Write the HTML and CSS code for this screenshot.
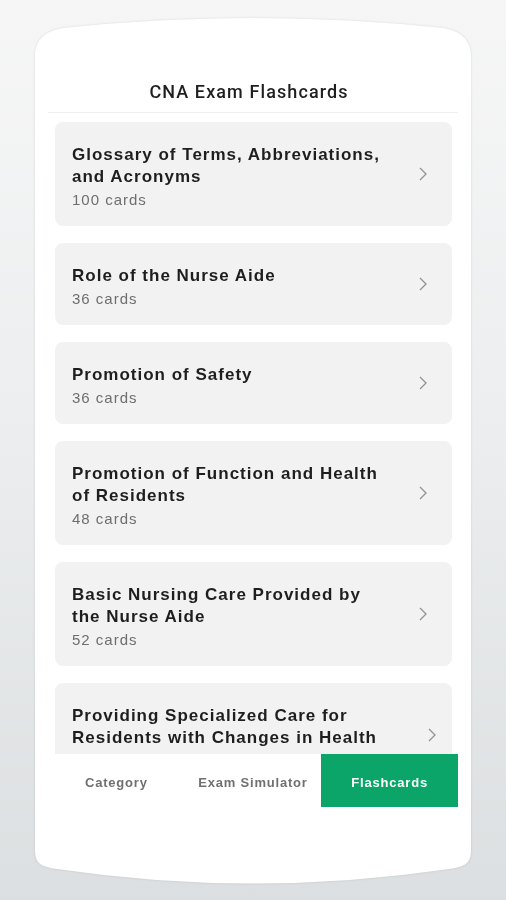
FILE: index.html
```html
<!DOCTYPE html>
<html lang="en">
<head>
  <meta charset="UTF-8" />
  <meta name="viewport" content="width=device-width, initial-scale=1.0"/>
  <title>CNA Exam Flashcards</title>
  <link rel="stylesheet" href="styles.css">
</head>
<body>
  <div class="shell">
    <div class="frame">
      <div class="header">CNA Exam Flashcards</div>

      <div class="list">
        <div class="deck">
          <div class="deck-text">
            <div class="deck-title">Glossary of Terms, Abbreviations, and Acronyms</div>
            <div class="deck-count">100 cards</div>
          </div>
          <svg class="chevron" viewBox="0 0 10 16"><path d="M2 2l6 6-6 6"/></svg>
        </div>

        <div class="deck">
          <div class="deck-text">
            <div class="deck-title">Role of the Nurse Aide</div>
            <div class="deck-count">36 cards</div>
          </div>
          <svg class="chevron" viewBox="0 0 10 16"><path d="M2 2l6 6-6 6"/></svg>
        </div>

        <div class="deck">
          <div class="deck-text">
            <div class="deck-title">Promotion of Safety</div>
            <div class="deck-count">36 cards</div>
          </div>
          <svg class="chevron" viewBox="0 0 10 16"><path d="M2 2l6 6-6 6"/></svg>
        </div>

        <div class="deck">
          <div class="deck-text">
            <div class="deck-title">Promotion of Function and Health of Residents</div>
            <div class="deck-count">48 cards</div>
          </div>
          <svg class="chevron" viewBox="0 0 10 16"><path d="M2 2l6 6-6 6"/></svg>
        </div>

        <div class="deck">
          <div class="deck-text">
            <div class="deck-title">Basic Nursing Care Provided by the Nurse Aide</div>
            <div class="deck-count">52 cards</div>
          </div>
          <svg class="chevron" viewBox="0 0 10 16"><path d="M2 2l6 6-6 6"/></svg>
        </div>

        <!-- last deck is cut off by the tab bar, its count sits below it -->
        <div class="deck deck-wide">
          <div class="deck-text">
            <div class="deck-title">Providing Specialized Care for Residents with Changes in Health</div>
            <div class="deck-spacer"></div>
          </div>
          <svg class="chevron" viewBox="0 0 10 16"><path d="M2 2l6 6-6 6"/></svg>
        </div>
      </div>

      <div class="tabs">
        <div class="tab">Category</div>
        <div class="tab">Exam Simulator</div>
        <div class="tab active">Flashcards</div>
      </div>
    </div>
  </div>
</body>
</html>
```

FILE: styles.css
```css
html, body {
  margin: 0;
  height: 900px;
}

body {
  font-family: "Liberation Sans", Arial, sans-serif;
  background: linear-gradient(180deg, #f6f6f6 0%, #eceeef 45%, #dcdfe1 100%);
  overflow: hidden;
}

.shell {
  padding: 18px 0 0 35px;
  filter: drop-shadow(0 0 1px rgba(0, 0, 0, 0.12));
}

.frame {
  width: 436px;
  height: 868px;
  background: #fff;
  display: flex;
  flex-direction: column;
  clip-path: path('M0 38 C0 22 10 13 28 10 Q218 -10 408 10 C426 13 436 22 436 38 L436 832 C436 845 430 849 414 851 Q218 880 22 851 C6 849 0 845 0 832 Z');
}

.header {
  margin: 0 13px;
  padding: 62px 8px 8px 0;
  line-height: 24px;
  font-family: Roboto, "Liberation Sans", sans-serif;
  font-size: 18px;
  font-weight: 500;
  letter-spacing: 1.1px;
  color: #1f1f1f;
  text-align: center;
  border-bottom: 1px solid #efefef;
}

.list {
  height: 632px;
  margin: 0 19px 0 20px;
  padding-top: 9px;
  display: flex;
  flex-direction: column;
  gap: 17px;
  overflow: hidden;
}

.deck {
  flex-shrink: 0;
  display: flex;
  align-items: center;
  background: #f2f2f2;
  border-radius: 8px;
  padding: 22px 24px 15px 17px;
}

.deck-text {
  flex: 1;
  padding-right: 28px;
}

.deck-title {
  font-size: 17px;
  font-weight: 700;
  line-height: 22px;
  letter-spacing: 1px;
  color: #1e1e1e;
}

.deck-count {
  margin-top: 1px;
  font-size: 15px;
  line-height: 22px;
  letter-spacing: 1px;
  color: #6e6e6e;
}

.deck-spacer {
  height: 23px;
}

.deck-wide {
  padding-right: 15px;
}

.chevron {
  width: 10px;
  height: 16px;
  margin-top: -7px;
  flex-shrink: 0;
  fill: none;
  stroke: #929292;
  stroke-width: 1.3;
}

.tabs {
  margin: 0 13px;
  height: 53px;
  display: grid;
  grid-template-columns: repeat(3, 1fr);
  background: #fff;
}

.tab {
  display: flex;
  align-items: center;
  justify-content: center;
  padding-top: 3px;
  font-size: 13px;
  font-weight: 700;
  letter-spacing: 0.8px;
  color: #707070;
}

.tab.active {
  background: #0ba56a;
  color: #fff;
}
```
